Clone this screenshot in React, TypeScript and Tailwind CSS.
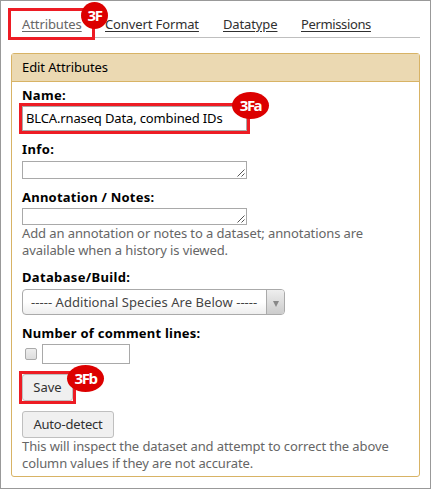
import type { ReactNode } from "react";

function Label({ children, className }: { children: ReactNode; className: string }) {
  return <div className={`h-[17px] whitespace-nowrap font-bold leading-[17px] text-black ${className}`}>{children}</div>;
}

function Badge({ children, className }: { children: ReactNode; className: string }) {
  return (
    <div className={`absolute z-10 flex items-center justify-center rounded-[50%] bg-[#dc0000] font-['Open_Sans',sans-serif] text-[15px] font-bold leading-none tracking-[-1.5px] text-white ${className}`}>
      {children}
    </div>
  );
}

function Area({ className }: { className: string }) {
  return (
    <div className={`flex w-[225px] items-end justify-end border border-[#a9a9a9] bg-white pb-px ${className}`}>
      <svg width="9" height="8" viewBox="0 0 9 8" stroke="#555" fill="none">
        <path d="M0.5 7.5L7.5 0.5M4.5 7.5L7.5 4.5" />
      </svg>
    </div>
  );
}

export default function App() {
  return (
    <div className="h-[489px] w-[431px] overflow-hidden border border-[#999] bg-white px-[10px] pt-[10px] font-['Noto_Sans',sans-serif] text-[13px] text-[#303030]">
      <nav className="relative flex h-[27px] w-[409px] border-b border-[#bfbfbf] pl-[11px] leading-[26px]">
        <span className="w-[83px] whitespace-nowrap tracking-[-0.1px] text-[#666] underline underline-offset-2">Attributes</span>
        <span className="w-[118px] whitespace-nowrap tracking-[-0.12px] underline underline-offset-2">Convert Format</span>
        <span className="w-[78px] whitespace-nowrap tracking-[-0.12px] underline underline-offset-2">Datatype</span>
        <span className="whitespace-nowrap tracking-[-0.37px] underline underline-offset-2">Permissions</span>
        <div className="absolute -left-[3px] -top-[3px] h-[32px] w-[87px] border-[3px] border-[#ed1c24]" />
        <Badge className="left-[70px] -top-[9px] h-[27px] w-[27px]">3F</Badge>
      </nav>
      <main className="mt-[15px] h-[424px] w-[409px] rounded-[3px] border border-[#d8b365]">
        <h1 className="h-[28px] border-b border-[#d8b365] bg-[#ebd9b2] pl-[10px] leading-[27px] tracking-[-0.1px] text-black">Edit Attributes</h1>
        <div className="pl-[10px]">
          <Label className="mt-[5px] tracking-[0.3px]">Name:</Label>
          <div className="relative mt-[2px] h-[25px] w-[225px] whitespace-nowrap border border-[#a9a9a9] pl-[3px] leading-[22px] tracking-[-0.14px] text-black">
            BLCA.rnaseq Data, combined IDs
            <div className="absolute -left-[4px] -top-[4px] h-[31px] w-[231px] border-[3px] border-[#ed1c24]" />
            <Badge className="left-[209px] -top-[15px] h-[27px] w-[37px]">3Fa</Badge>
          </div>
          <Label className="mt-[10px] tracking-[0.4px]">Info:</Label>
          <Area className="mt-[3px] h-[18px]" />
          <Label className="mt-[10px] tracking-[0.23px]">Annotation / Notes:</Label>
          <Area className="mt-[2px] h-[17px]" />
          <p className="whitespace-nowrap leading-[17px] tracking-[-0.1px] text-[#666]">Add an annotation or notes to a dataset; annotations are<br />available when a history is viewed.</p>
          <Label className="mt-[10px] tracking-[0.34px]">Database/Build:</Label>
          <div className="mt-[3px] flex h-[26px] w-[263px] overflow-hidden rounded-[4px] border border-[#aaa] bg-linear-to-b from-white from-50% to-[#eee] text-[#444]">
            <span className="w-[243px] whitespace-nowrap pl-[8px] leading-[24px] tracking-[0.05px]">----- Additional Species Are Below -----</span>
            <span className="flex flex-1 items-center justify-center border-l border-[#aaa] bg-linear-to-b from-[#eee] to-[#ccc] pt-[3px]">
              <svg width="6" height="6" viewBox="0 0 6 6"><path d="M0 0h6L3 6z" fill="#888" /></svg>
            </span>
          </div>
          <Label className="mt-[10px] tracking-[0.23px]">Number of comment lines:</Label>
          <div className="mt-[2px] flex h-[20px] pl-[3px]">
            <span className="mt-[4px] size-[12px] rounded-[2px] border border-[#aaa] bg-linear-to-b from-[#eee] to-[#ddd]" />
            <span className="ml-[5px] w-[88px] border border-[#a9a9a9]" />
          </div>
          <div className="relative mt-[10px] h-[27px] w-[51px] rounded-[3px] border border-[#bfbfbf] bg-[#f0f0f0] text-center leading-[25px]">
            Save
            <div className="absolute -left-[4px] -top-[4px] h-[33px] w-[57px] border-[3px] border-[#ed1c24]" />
            <Badge className="left-[44px] -top-[10px] h-[27px] w-[37px]">3Fb</Badge>
          </div>
          <div className="mt-[10px] h-[27px] w-[92px] whitespace-nowrap rounded-[3px] border border-[#bfbfbf] bg-[#f0f0f0] text-center leading-[25px] tracking-[-0.2px]">Auto-detect</div>
          <p className="whitespace-nowrap leading-[17px] tracking-[-0.1px] text-[#666]">This will inspect the dataset and attempt to correct the above<br />column values if they are not accurate.</p>
        </div>
      </main>
    </div>
  );
}
